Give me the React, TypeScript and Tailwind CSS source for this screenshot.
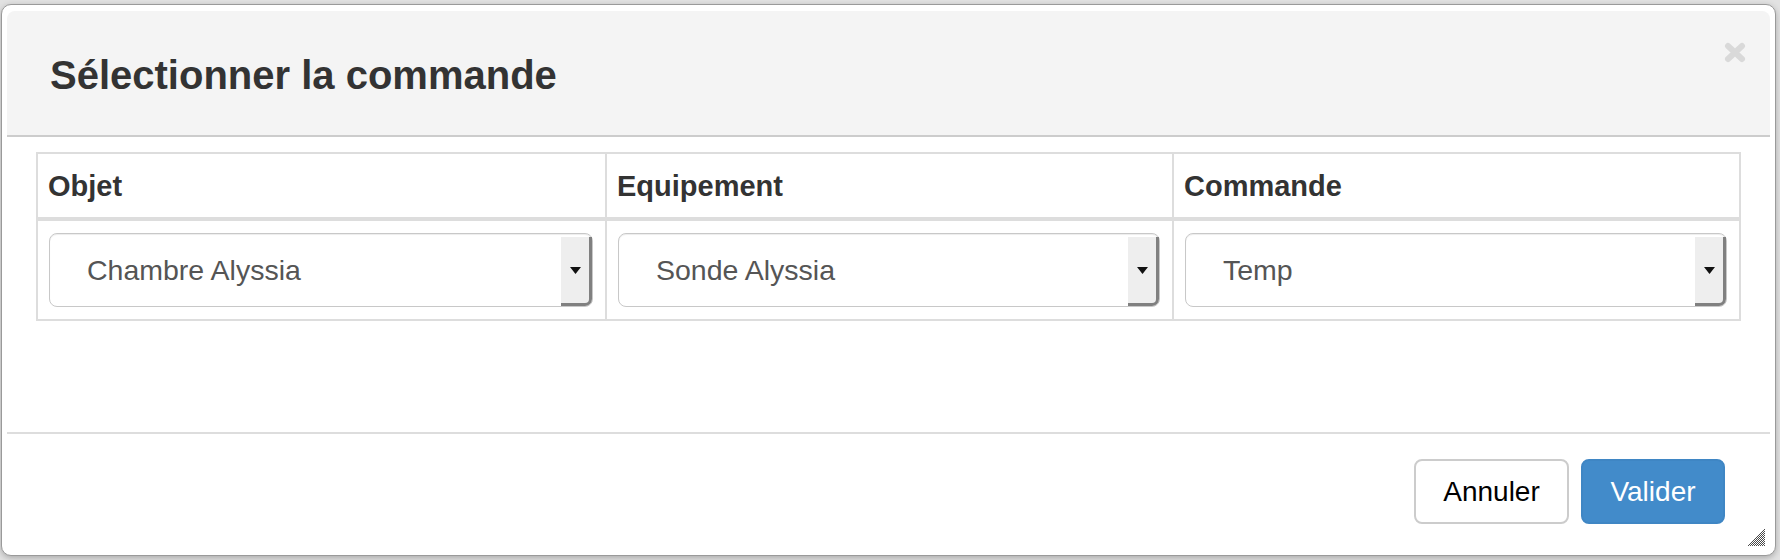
import React from "react";

const columns = [
  { label: "Objet", value: "Chambre Alyssia" },
  { label: "Equipement", value: "Sonde Alyssia" },
  { label: "Commande", value: "Temp" },
];

const SelectBox = ({ value }: { value: string }) => (
  <div className="flex h-[74px] rounded-[8px] border border-[#c8c8c8] bg-white shadow-[inset_0_1px_1px_rgba(0,0,0,0.075)]">
    <div className="flex flex-1 items-center pl-[37px] text-[28.5px] text-[#555]">
      {value}
    </div>
    <div className="mt-[3px] flex w-[31px] items-center justify-center rounded-br-[7px] border-r-[3px] border-b-[3px] border-[#808080] bg-[#eeeeee]">
      <svg width="11" height="7" viewBox="0 0 11 7">
        <path d="M0 0 H11 L5.5 7 Z" fill="#111" />
      </svg>
    </div>
  </div>
);

// little checkered corner of the dialog
const ResizeGrip = () => {
  const dots: React.ReactNode[] = [];
  for (let x = 0; x < 17; x++) {
    for (let y = 0; y < 17; y++) {
      if (x + y >= 16 && (x + y) % 2 === 0) {
        dots.push(<rect key={`${x}-${y}`} x={x} y={y} width="1" height="1" fill="#4a4a4a" />);
      }
    }
  }
  return (
    <svg width="17" height="17" viewBox="0 0 17 17" className="absolute right-[10px] bottom-[9px]">
      {dots}
    </svg>
  );
};

export default function App() {
  return (
    <div className="h-[560px] w-[1780px] overflow-hidden bg-[#e2e2e2] pt-[4px] pl-[1px] font-['Liberation_Sans',Arial,sans-serif]">
      <div className="relative flex h-[552px] w-[1775px] flex-col rounded-[10px] border border-[#9a9a9a] bg-white px-[5px] pt-[6px] shadow-[0_2px_6px_rgba(0,0,0,0.25)]">
        {/* Header */}
        <div className="flex h-[126px] justify-between rounded-t-[8px] border-b-2 border-[#cccccc] bg-[#f4f4f4] pr-[24px] pl-[43px]">
          <h1 className="pt-[42px] text-[40px] leading-[44px] font-bold text-[#333]">
            Sélectionner la commande
          </h1>
          <svg width="22" height="21" viewBox="0 0 22 21" className="mt-[31px]">
            <path d="M4 4 L18 17 M18 4 L4 17" stroke="#d9d9d9" strokeWidth="6" strokeLinecap="round" />
          </svg>
        </div>

        {/* Body */}
        <div className="h-[295px] px-[29px] pt-[15px]">
          <div className="border-2 border-[#dddddd]">
            <div className="grid grid-cols-3 border-b-4 border-[#dddddd]">
              {columns.map((col, i) => (
                <div
                  key={col.label}
                  className={`px-[10px] pt-[12px] pb-[10px] text-[29px] leading-[41px] font-bold text-[#333] ${i > 0 ? "border-l-2 border-[#dddddd]" : ""}`}
                >
                  {col.label}
                </div>
              ))}
            </div>
            <div className="grid grid-cols-3">
              {columns.map((col, i) => (
                <div
                  key={col.label}
                  className={`pt-[12px] pr-[12px] pb-[12px] pl-[11px] ${i > 0 ? "border-l-2 border-[#dddddd]" : ""}`}
                >
                  <SelectBox value={col.value} />
                </div>
              ))}
            </div>
          </div>
        </div>

        {/* Footer */}
        <div className="flex justify-end gap-[12px] border-t-2 border-[#dddddd] pt-[25px] pr-[45px]">
          <button className="flex h-[65px] w-[155px] items-center justify-center rounded-[8px] border-2 border-[#cccccc] bg-white text-[28px] text-black">
            Annuler
          </button>
          <button className="flex h-[65px] w-[144px] items-center justify-center rounded-[8px] border-2 border-[#3f86c4] bg-[#428bca] text-[28px] text-white">
            Valider
          </button>
        </div>

        <ResizeGrip />
      </div>
    </div>
  );
}
